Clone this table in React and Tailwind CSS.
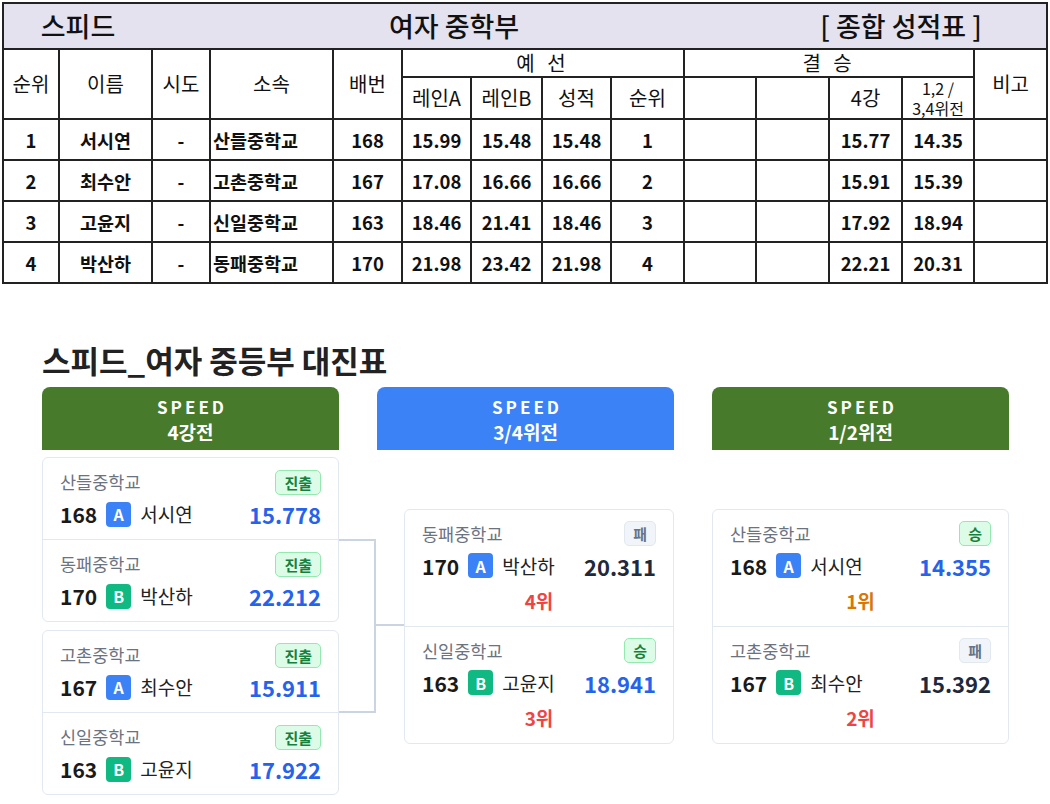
import React from "react";

const rows = [
  ["1", "서시연", "-", "산들중학교", "168", "15.99", "15.48", "15.48", "1", "", "", "15.77", "14.35", ""],
  ["2", "최수안", "-", "고촌중학교", "167", "17.08", "16.66", "16.66", "2", "", "", "15.91", "15.39", ""],
  ["3", "고윤지", "-", "신일중학교", "163", "18.46", "21.41", "18.46", "3", "", "", "17.92", "18.94", ""],
  ["4", "박산하", "-", "동패중학교", "170", "21.98", "23.42", "21.98", "4", "", "", "22.21", "20.31", ""],
];

const cell = "border-2 border-[#222] p-0 text-center align-middle";

function ResultTable() {
  return (
    <table className="ml-[2px] mt-[2px] w-[1044px] table-fixed border-collapse border-2 border-[#222] text-[#111]">
      <colgroup>
        <col className="w-[56px]" />
        <col className="w-[93px]" />
        <col className="w-[58px]" />
        <col className="w-[123px]" />
        <col className="w-[69px]" />
        <col className="w-[69px]" />
        <col className="w-[71px]" />
        <col className="w-[69px]" />
        <col className="w-[73px]" />
        <col className="w-[72px]" />
        <col className="w-[73px]" />
        <col className="w-[73px]" />
        <col className="w-[72px]" />
        <col className="w-[73px]" />
      </colgroup>
      <tbody>
        <tr className="h-[46px] bg-[#e4e2ef] text-[27px] font-medium leading-[34px]">
          <td colSpan={2} className="border-y-2 border-l-2 border-r-0 border-[#222] text-center align-middle">
            스피드
          </td>
          <td colSpan={8} className="border-y-2 border-x-0 border-[#222] text-center align-middle">
            여자 중학부
          </td>
          <td colSpan={4} className="border-y-2 border-r-2 border-l-0 border-[#222] text-center align-middle">
            [ 종합 성적표 ]
          </td>
        </tr>
        <tr className="h-[28px] text-[20px] leading-[24px]">
          <td rowSpan={2} className={cell}>순위</td>
          <td rowSpan={2} className={cell}>이름</td>
          <td rowSpan={2} className={cell}>시도</td>
          <td rowSpan={2} className={cell}>소속</td>
          <td rowSpan={2} className={cell}>배번</td>
          <td colSpan={4} className={cell + " tracking-[4px]"}>예 선</td>
          <td colSpan={4} className={cell + " tracking-[4px]"}>결 승</td>
          <td rowSpan={2} className={cell}>비고</td>
        </tr>
        <tr className="h-[42px] text-[20px] leading-[24px]">
          <td className={cell}>레인A</td>
          <td className={cell}>레인B</td>
          <td className={cell}>성적</td>
          <td className={cell}>순위</td>
          <td className={cell}></td>
          <td className={cell}></td>
          <td className={cell}>4강</td>
          <td className={cell + " text-[16px] leading-[20px]"}>
            <div>1,2 /</div>
            <div>3,4위전</div>
          </td>
        </tr>
        {rows.map((r, i) => (
          <tr key={i} className="h-[41px] text-[18.5px] font-semibold leading-[24px]">
            {r.map((v, j) => (
              <td key={j} className={j === 3 ? "border-2 border-[#222] p-0 pl-[2px] text-left align-middle" : cell}>
                {v}
              </td>
            ))}
          </tr>
        ))}
      </tbody>
    </table>
  );
}

function Badge({ kind, children }) {
  const cls =
    kind === "win"
      ? "bg-[#dcfce7] border-[#93e9b0] text-[#15803d]"
      : "bg-[#f1f5f9] border-[#e2e8f0] text-[#64748b]";
  return (
    <span className={"flex h-[25px] items-center rounded-[5px] border px-[8px] text-[15px] font-bold leading-none " + cls}>
      {children}
    </span>
  );
}

function Lane({ lane }) {
  return (
    <span
      className={
        "ml-[9px] flex h-[25px] w-[25px] items-center justify-center rounded-[4px] text-[16px] font-bold leading-none text-white " +
        (lane === "A" ? "bg-[#3b82f6]" : "bg-[#10b981]")
      }
    >
      {lane}
    </span>
  );
}

function Entry({ school, badge, badgeKind, no, lane, name, time, timeBlue, rank, rankColor, tall }) {
  return (
    <div className={"flex flex-col px-[17px] pt-[12px] " + (tall ? "h-[116px]" : "h-[81px]")}>
      <div className="flex h-[24px] items-center justify-between">
        <span className="text-[17.5px] leading-[24px] text-[#6b7280]">{school}</span>
        <Badge kind={badgeKind}>{badge}</Badge>
      </div>
      <div className="mt-[7px] flex h-[26px] items-center">
        <span className="text-[21px] font-bold leading-[26px] text-[#1a1a1a]">{no}</span>
        <Lane lane={lane} />
        <span className="ml-[9px] text-[19px] leading-[26px] text-[#222]">{name}</span>
        <span
          className={
            "ml-auto text-[22px] font-bold leading-[26px] " + (timeBlue ? "text-[#2563eb]" : "text-[#1e293b]")
          }
        >
          {time}
        </span>
      </div>
      {rank && (
        <div className={"mt-[10px] text-center text-[19px] font-bold leading-[24px] " + rankColor}>{rank}</div>
      )}
    </div>
  );
}

function Header({ color, title }) {
  return (
    <div
      className={
        "flex h-[63px] flex-col items-center justify-center rounded-t-[8px] text-white " + color
      }
    >
      <div className="pl-[3px] text-[17px] font-bold leading-[25px] tracking-[3px]">SPEED</div>
      <div className="text-[19px] font-bold leading-[25px]">{title}</div>
    </div>
  );
}

function Card({ children, className = "" }) {
  return (
    <div className={"flex flex-col rounded-[6px] border border-[#e2e8f0] bg-white " + className}>{children}</div>
  );
}

const Divider = () => <div className="h-px bg-[#e2e8f0]" />;

function Bracket() {
  return (
    <div className="mt-[57px] px-[42px] pb-[8px]">
      <h2 className="text-[31px] font-bold leading-[38px] text-[#222]">스피드_여자 중등부 대진표</h2>
      <div className="relative mt-[8px] grid grid-cols-[297px_297px_297px] gap-x-[38px]">
        <svg className="pointer-events-none absolute left-0 top-0" width="400" height="400">
          <g stroke="#cbd5e1" strokeWidth="2" fill="none">
            <path d="M297 153 H333 V325 H297" />
            <path d="M333 238 H362" />
          </g>
        </svg>

        <div className="flex flex-col">
          <Header color="bg-[#487a2c]" title="4강전" />
          <div className="mt-[7px] flex flex-col gap-[8px]">
            <Card>
              <Entry school="산들중학교" badge="진출" badgeKind="win" no="168" lane="A" name="서시연" time="15.778" timeBlue />
              <Divider />
              <Entry school="동패중학교" badge="진출" badgeKind="win" no="170" lane="B" name="박산하" time="22.212" timeBlue />
            </Card>
            <Card>
              <Entry school="고촌중학교" badge="진출" badgeKind="win" no="167" lane="A" name="최수안" time="15.911" timeBlue />
              <Divider />
              <Entry school="신일중학교" badge="진출" badgeKind="win" no="163" lane="B" name="고윤지" time="17.922" timeBlue />
            </Card>
          </div>
        </div>

        <div className="flex flex-col">
          <Header color="bg-[#3b82f6]" title="3/4위전" />
          <div className="mt-[7px] flex flex-1 items-center pl-[27px]">
            <Card className="w-full">
              <Entry tall school="동패중학교" badge="패" badgeKind="lose" no="170" lane="A" name="박산하" time="20.311" rank="4위" rankColor="text-[#ef4444]" />
              <Divider />
              <Entry tall school="신일중학교" badge="승" badgeKind="win" no="163" lane="B" name="고윤지" time="18.941" timeBlue rank="3위" rankColor="text-[#ef4444]" />
            </Card>
          </div>
        </div>

        <div className="flex flex-col">
          <Header color="bg-[#487a2c]" title="1/2위전" />
          <div className="mt-[7px] flex flex-1 items-center">
            <Card className="w-full">
              <Entry tall school="산들중학교" badge="승" badgeKind="win" no="168" lane="A" name="서시연" time="14.355" timeBlue rank="1위" rankColor="text-[#d97706]" />
              <Divider />
              <Entry tall school="고촌중학교" badge="패" badgeKind="lose" no="167" lane="B" name="최수안" time="15.392" rank="2위" rankColor="text-[#ef4444]" />
            </Card>
          </div>
        </div>
      </div>
    </div>
  );
}

export default function App() {
  return (
    <div className="min-h-[804px] w-[1050px] bg-white font-['Noto_Sans_CJK_KR','Noto_Sans',sans-serif]">
      <ResultTable />
      <Bracket />
    </div>
  );
}
